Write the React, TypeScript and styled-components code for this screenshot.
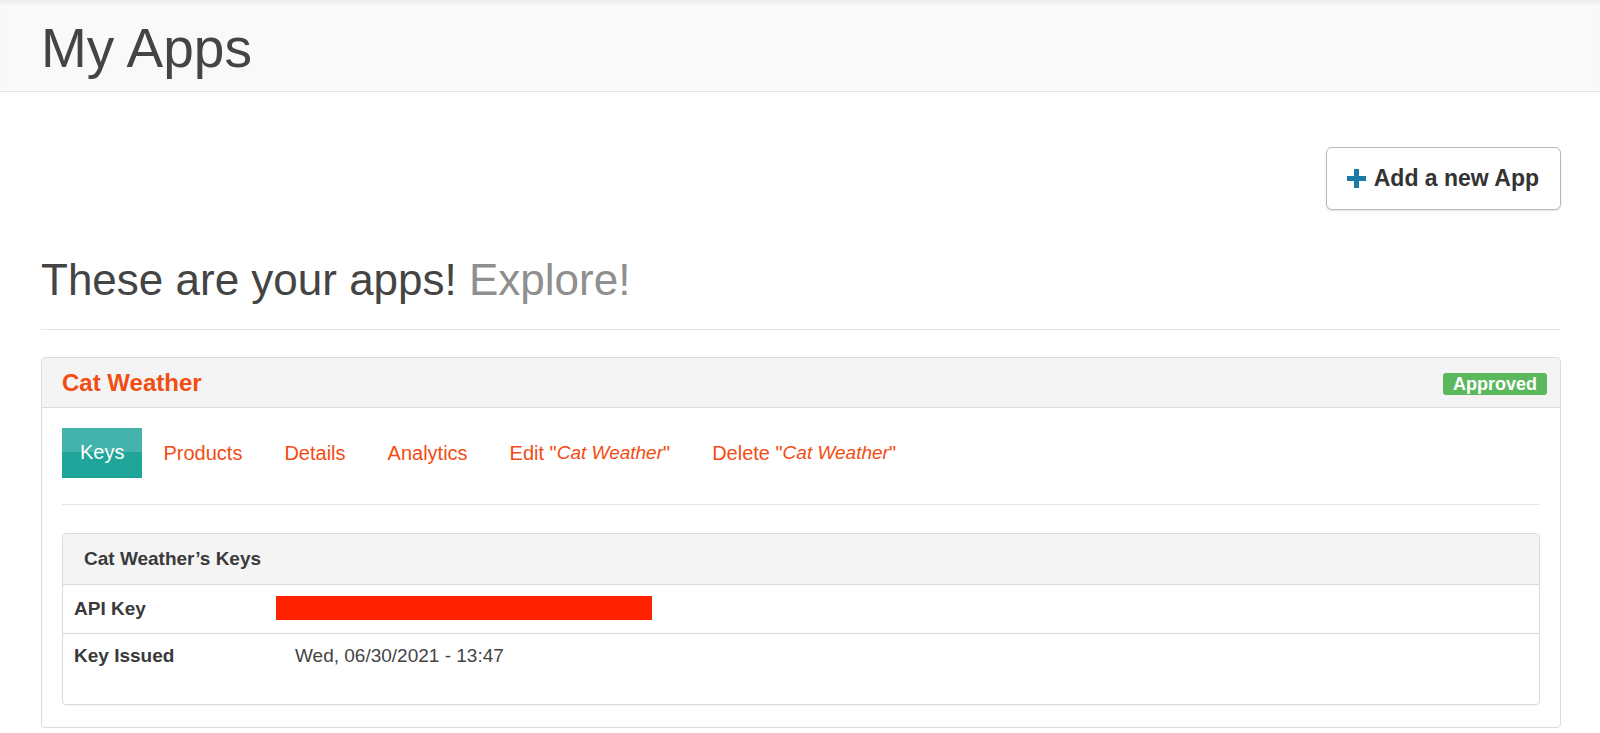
import React from "react";
import styled, { createGlobalStyle } from "styled-components";

const GlobalStyle = createGlobalStyle`
    html, body {
        margin: 0;
        padding: 0;
        background: #ffffff;
        font-family: "Liberation Sans", Arial, Helvetica, sans-serif;
        color: #444444;
    }
    * {
        box-sizing: border-box;
    }
`;

const PageHeader = styled.header`
    height: 92px;
    display: flex;
    align-items: center;
    padding: 4px 41px 0 41px;
    background: #f9f9f9;
    border-bottom: 1px solid #e2e2e2;
    box-shadow: inset 0 6px 6px -4px rgba(0, 0, 0, 0.07);
`;

const PageTitle = styled.h1`
    margin: 0;
    font-size: 55px;
    font-weight: 400;
    line-height: 60px;
    color: #444444;
`;

const Main = styled.main`
    padding: 0 39px 0 41px;
`;

const ActionsRow = styled.div`
    display: flex;
    justify-content: flex-end;
    margin-top: 55px;
`;

const AddButton = styled.button`
    height: 63px;
    display: flex;
    align-items: center;
    gap: 8px;
    padding: 0 21px 0 20px;
    background: #ffffff;
    border: 1px solid #b9b9b9;
    border-radius: 6px;
    box-shadow: 0 1px 2px rgba(0, 0, 0, 0.12);
    font-family: inherit;
    font-size: 23px;
    font-weight: 700;
    color: #333333;
    cursor: pointer;
`;

const SectionTitle = styled.h2`
    margin: 45px 0 0 0;
    font-size: 44px;
    font-weight: 400;
    line-height: 50px;
    color: #444444;
    padding-bottom: 24px;
    border-bottom: 1px solid #e5e5e5;
`;

const Muted = styled.span`
    color: #8f8f8f;
`;

const Panel = styled.section`
    margin-top: 27px;
    border: 1px solid #dcdcdc;
    border-radius: 4px;
    overflow: hidden;
`;

const PanelHeader = styled.div`
    height: 50px;
    display: flex;
    align-items: center;
    justify-content: space-between;
    padding: 0 13px 0 20px;
    background: #f4f4f4;
    border-bottom: 1px solid #dcdcdc;
`;

const AppName = styled.h3`
    margin: 0;
    font-size: 24px;
    font-weight: 700;
    color: #f24c12;
`;

const Badge = styled.span`
    height: 22px;
    display: inline-flex;
    align-items: center;
    margin-top: 3px;
    padding: 0 10px;
    background: #5cb85c;
    border-radius: 3px;
    color: #ffffff;
    font-size: 18px;
    font-weight: 700;
`;

const PanelBody = styled.div`
    padding: 20px 20px 22px 20px;
`;

const Tabs = styled.nav`
    display: flex;
    padding-bottom: 26px;
    border-bottom: 1px solid #e6e6e6;
`;

const Tab = styled.a<{ $active?: boolean }>`
    height: 50px;
    display: flex;
    align-items: center;
    padding: ${(p) => (p.$active ? "0 18px" : "0 21px")};
    font-size: 20px;
    text-decoration: none;
    cursor: pointer;
    color: ${(p) => (p.$active ? "#ffffff" : "#f24c12")};
    background: ${(p) =>
        p.$active
            ? "linear-gradient(to bottom, #44b3ab 0%, #44b3ab 48%, #1fa59a 48%, #1fa59a 100%)"
            : "transparent"};
    border-bottom: ${(p) => (p.$active ? "1px solid #1b9d92" : "none")};
    white-space: pre;
    i {
        font-style: italic;
        font-size: 19px;
    }
`;

const KeysPanel = styled.div`
    margin-top: 28px;
    border: 1px solid #dadada;
    border-radius: 4px;
    overflow: hidden;
    box-shadow: 0 1px 1px rgba(0, 0, 0, 0.05);
`;

const KeysHeader = styled.div`
    height: 51px;
    display: flex;
    align-items: center;
    padding: 0 21px;
    background: #f4f4f4;
    border-bottom: 1px solid #dadada;
    font-size: 19px;
    font-weight: 700;
    color: #3a3a3a;
`;

const KeyRow = styled.div<{ $last?: boolean }>`
    display: grid;
    grid-template-columns: 202px 1fr;
    align-items: center;
    padding: ${(p) => (p.$last ? "10px 11px 36px 11px" : "12px 11px")};
    border-bottom: ${(p) => (p.$last ? "none" : "1px solid #dadada")};
    line-height: 24px;
`;

const KeyLabel = styled.span`
    font-size: 19px;
    font-weight: 700;
    color: #3a3a3a;
`;

const KeyValue = styled.span`
    padding-left: 19px;
    font-size: 19px;
    color: #444444;
`;

const Redacted = styled.span`
    display: block;
    width: 376px;
    height: 24px;
    margin-top: -2px;
    background: #ff2200;
`;

const PlusIcon = () => (
    <svg width="19" height="19" viewBox="0 0 19 19">
        <rect x="7" y="0" width="5" height="19" fill="#1c7ba5" />
        <rect x="0" y="7" width="19" height="5" fill="#1c7ba5" />
    </svg>
);

const App = () => {
    const appName = "Cat Weather";

    return (
        <>
            <GlobalStyle />
            <PageHeader>
                <PageTitle>My Apps</PageTitle>
            </PageHeader>
            <Main>
                <ActionsRow>
                    <AddButton>
                        <PlusIcon />
                        Add a new App
                    </AddButton>
                </ActionsRow>
                <SectionTitle>
                    These are your apps! <Muted>Explore!</Muted>
                </SectionTitle>
                <Panel>
                    <PanelHeader>
                        <AppName>{appName}</AppName>
                        <Badge>Approved</Badge>
                    </PanelHeader>
                    <PanelBody>
                        <Tabs>
                            <Tab $active>Keys</Tab>
                            <Tab>Products</Tab>
                            <Tab>Details</Tab>
                            <Tab>Analytics</Tab>
                            <Tab>
                                Edit "<i>{appName}</i>"
                            </Tab>
                            <Tab>
                                Delete "<i>{appName}</i>"
                            </Tab>
                        </Tabs>
                        <KeysPanel>
                            <KeysHeader>{appName}’s Keys</KeysHeader>
                            <KeyRow>
                                <KeyLabel>API Key</KeyLabel>
                                <Redacted />
                            </KeyRow>
                            <KeyRow $last>
                                <KeyLabel>Key Issued</KeyLabel>
                                <KeyValue>Wed, 06/30/2021 - 13:47</KeyValue>
                            </KeyRow>
                        </KeysPanel>
                    </PanelBody>
                </Panel>
            </Main>
        </>
    );
};

export default App;
